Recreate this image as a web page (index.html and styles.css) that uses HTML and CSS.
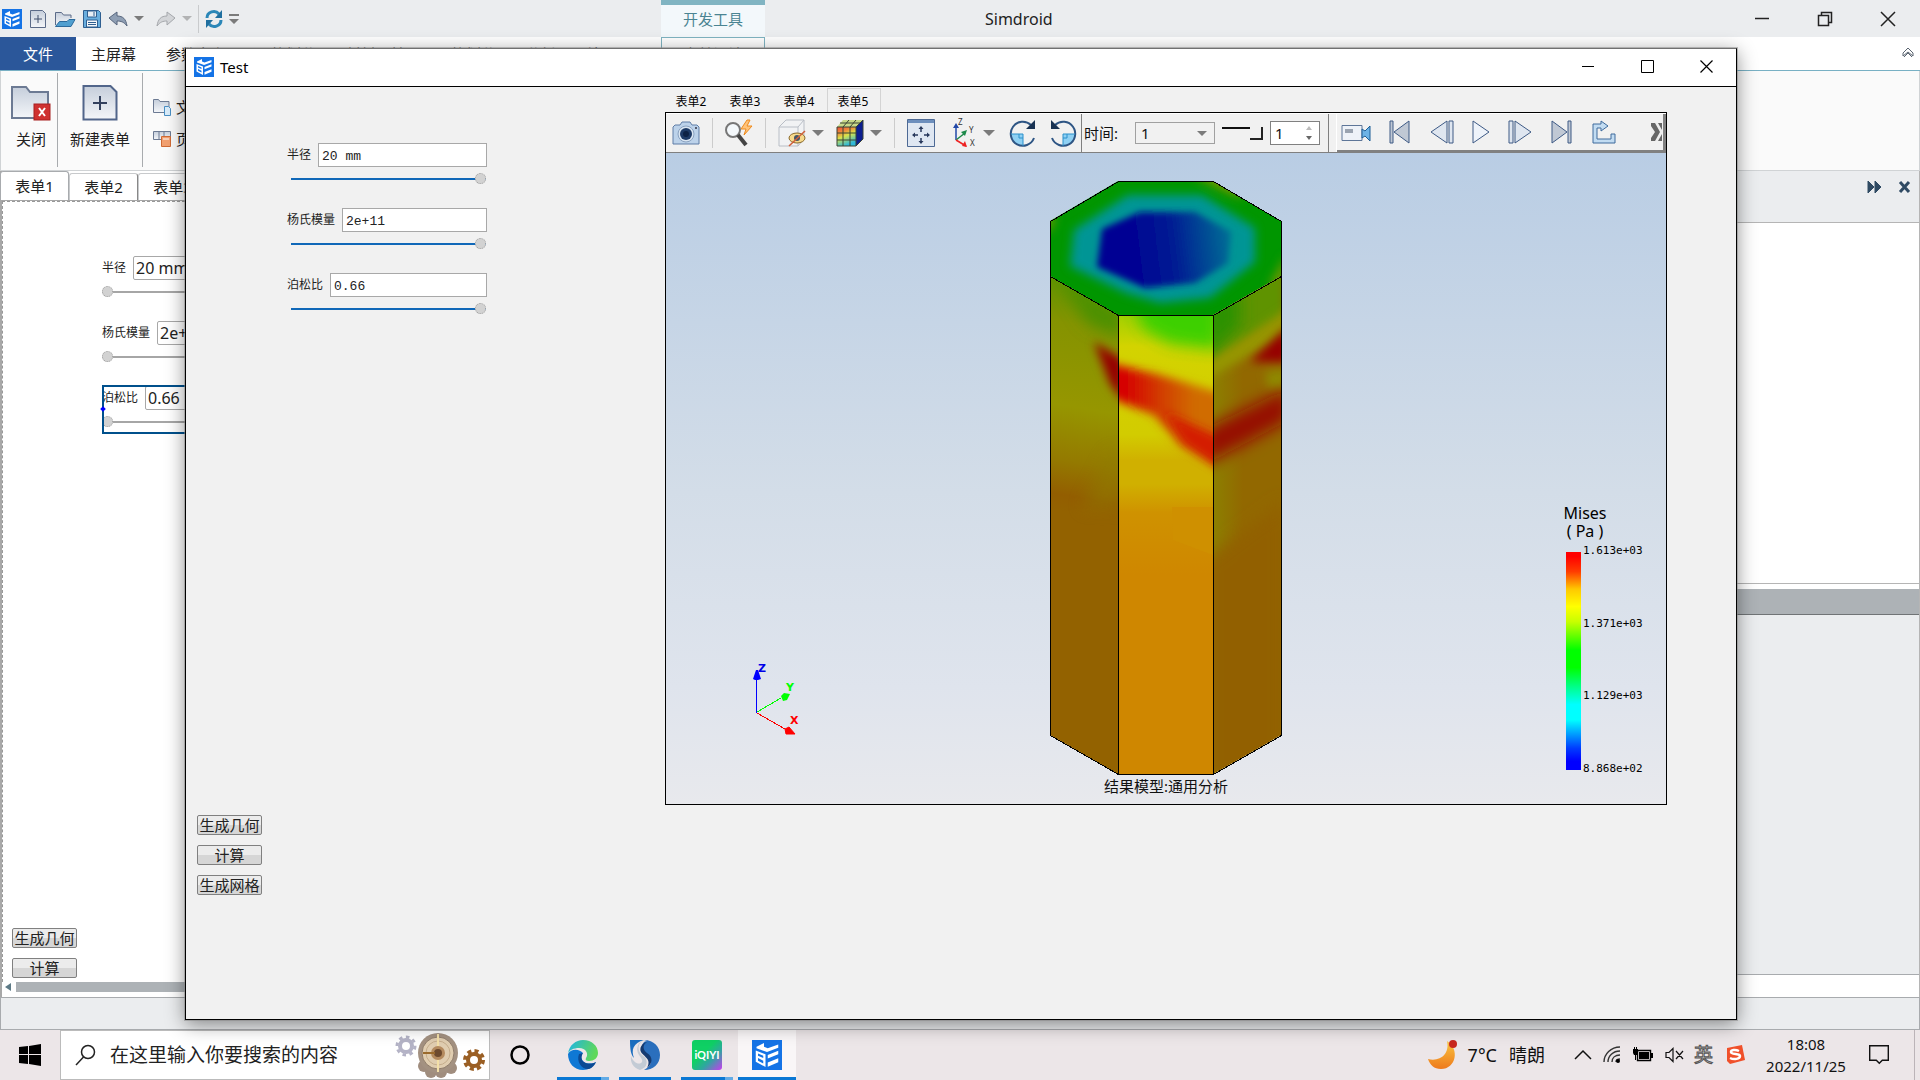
FILE: index.html
```html
<!DOCTYPE html>
<html lang="zh-CN">
<head>
<meta charset="utf-8">
<title>Simdroid</title>
<link rel="stylesheet" href="styles.css">
</head>
<body>
<svg class="defs" aria-hidden="true">
  <symbol id="logo" viewBox="0 0 20 20">
    <rect width="20" height="20" fill="#1473e6"/>
    <path d="M3 4.500L8 2v2.500l2.500 1L17.500 3v2.200L10 8 3 5.500z" fill="#fff"/>
    <path d="M2.500 7l6.500 2.500V18l-6.500-3.500zM4 9v1.500l3.500 1.500v-1.500zM4 12v1.800l3.500 1.800v-1.800z" fill="#fff" fill-rule="evenodd"/>
    <path d="M10.500 10l7-2.800v2.300l-7 2.800zM10.500 15l7-2.800v2.600l-7 3z" fill="#fff"/>
  </symbol>
  <symbol id="caret" viewBox="0 0 12 8"><path d="M0 1h12L6 7z" fill="#7b7b7b"/></symbol>
  <linearGradient id="steel" x1="0" y1="0" x2="0" y2="1"><stop offset="0" stop-color="#c5cedb"/><stop offset="1" stop-color="#f4f6f9"/></linearGradient>
</svg>

<div class="app">
  <header class="titlebar">
    <div class="quick">
      <svg class="i20"><use href="#logo"/></svg>
      <button aria-label="新建"><svg width="20" height="20" viewBox="0 0 20 20"><path d="M2.500 1.500h12l3 3v14h-15z" fill="url(#steel)" stroke="#5b6b88"/><path d="M10 6v8M6 10h8" stroke="#3c4c6b"/></svg></button>
      <button aria-label="打开"><svg width="22" height="20" viewBox="0 0 22 20"><path d="M1.500 16V3.500h6l2 2.500H17v3" fill="url(#steel)" stroke="#5b6b88"/><path d="M1.500 17.500l4-5H13l2-2h6l-4 7z" fill="#4f9fd0" stroke="#2b6a9c"/></svg></button>
      <button aria-label="保存"><svg width="20" height="20" viewBox="0 0 20 20"><path d="M1.500 1.500h15l2 2v15h-17z" fill="#69aede" stroke="#2f5f90"/><path d="M5.500 2h9v6h-9z" fill="#e8eef5" stroke="#2f5f90"/><path d="M4.500 11h11v7h-11z" fill="#f5f7fa" stroke="#2f5f90"/><path d="M6 13.500h8M6 15.500h8M12 3v4" stroke="#2f5f90"/></svg></button>
      <button aria-label="撤销"><svg width="20" height="20" viewBox="0 0 20 20"><path d="M1 9l8-6v4c6 0 9 3 10 10-3-4-6-5-10-5v4z" fill="#8f9fb4" stroke="#56657c"/></svg></button>
      <svg class="c10"><use href="#caret"/></svg>
      <button aria-label="重做" class="redo"><svg width="20" height="20" viewBox="0 0 20 20"><path d="M19 9l-8-6v4C5 7 2 10 1 17c3-4 6-5 10-5v4z" fill="#d3d5d8" stroke="#a4a7ab"/></svg></button>
      <svg class="c10 dim"><use href="#caret"/></svg>
      <i class="bar"></i>
      <button aria-label="刷新"><svg width="18" height="20" viewBox="0 0 18 20"><path d="M2 9C2 3 10 0 14 5" fill="none" stroke="#2b87b8" stroke-width="3"/><path d="M17 1v8H10z" fill="#1f6f9f"/><path d="M16 11c0 6-8 9-12 4" fill="none" stroke="#2b87b8" stroke-width="3"/><path d="M1 19v-8h7z" fill="#1f6f9f"/></svg></button>
      <svg width="10" height="12" viewBox="0 0 10 12"><path d="M0 1h10v2H0zM0 6h10l-5 5z" fill="#7b7b7b"/></svg>
    </div>
    <div class="context">开发工具</div>
    <h1>Simdroid</h1>
    <div class="winctl">
      <button aria-label="最小化"><svg width="16" height="16"><path d="M1 7.500h14" stroke="#222" stroke-width="1.500"/></svg></button>
      <button aria-label="还原"><svg width="16" height="16"><path d="M4.500 4V1.500h10v10H12M1.500 4.500h10v10h-10z" fill="none" stroke="#222" stroke-width="1.500"/></svg></button>
      <button aria-label="关闭"><svg width="16" height="16"><path d="M1 1l14 14M15 1L1 15" stroke="#222" stroke-width="1.500"/></svg></button>
    </div>
  </header>

  <nav class="ribtabs">
    <button class="file">文件</button>
    <button>主屏幕</button>
    <button>参数定义</button>
    <button>网格划分</button>
    <button>材料属性</button>
    <button>网格划分</button>
    <button>分析</button>
    <button>结果显示</button>
    <button class="dev">表单设计</button>
    <svg class="fold" width="12" height="12" viewBox="0 0 12 12"><path d="M1 6l5-5 5 5v3L6 5 1 9zM2 10l4-4 4 4" fill="none" stroke="#5a6470"/></svg>
  </nav>

  <div class="ribbon">
    <button class="big close"><svg width="40" height="36" viewBox="0 0 40 36"><path d="M1 33V2h14l4 5h18v26z" fill="url(#steel)" stroke="#6c7a93" stroke-width="2"/><rect x="23" y="19" width="16" height="16" fill="#cf3130" stroke="#a82020"/><path d="M28 23l6 8M34 23l-6 8" stroke="#fff" stroke-width="2"/></svg>关闭</button>
    <button class="big"><svg width="36" height="36" viewBox="0 0 36 36"><path d="M1.500 1h27l6 6v27.500h-33z" fill="url(#steel)" stroke="#51658a" stroke-width="2"/><path d="M18 11v14M11 18h14" stroke="#33415e" stroke-width="2"/></svg>新建表单</button>
    <div class="small">
      <button><svg width="20" height="20" viewBox="0 0 20 20"><path d="M1.500 15.500V2.500h5l1.500 2h9v11z" fill="url(#steel)" stroke="#6c7a93"/><path d="M12.500 9.500h4l2 2v7h-6z" fill="#d9ecfa" stroke="#4a8fc4"/></svg>文件管理</button>
      <button><svg width="20" height="20" viewBox="0 0 20 20"><path d="M1.500 2.500h17v8h-17zM7 3v7M12 3v7" fill="url(#steel)" stroke="#6c7a93"/><path d="M9.500 7.500h9v10h-9z" fill="#f2a070" stroke="#cf6a35"/><path d="M11 10h6" stroke="#fff"/></svg>页面布局</button>
    </div>
  </div>

  <main class="work">
    <section class="doc">
      <div class="doctabs"><button class="on">表单1</button><button>表单2</button><button>表单3</button></div>
      <div class="canvas">
        <form class="fields">
          <div class="field"><div class="row"><label for="a1">半径</label><input id="a1" value="20 mm"></div><input type="range" aria-label="半径" value="0"></div>
          <div class="field"><div class="row"><label for="a2">杨氏模量</label><input id="a2" value="2e+11"></div><input type="range" aria-label="杨氏模量" value="0"></div>
          <div class="field picked"><div class="row"><label for="a3">泊松比</label><input id="a3" value="0.66"></div><input type="range" aria-label="泊松比" value="0"></div>
        </form>
        <div class="acts"><button>生成几何</button><button>计算</button></div>
      </div>
      <div class="hscroll"><svg width="6" height="10"><path d="M6 1v8L0 5z" fill="#5d7a86"/></svg><i></i></div>
    </section>
    <aside class="dock">
      <div class="dockhead">
        <svg width="15" height="14"><path d="M1 1l6 6-6 6zM8 1l6 6-6 6z" fill="#2f4a63" stroke="#2f4a63"/></svg>
        <svg width="13" height="14"><path d="M2 2l9 10M11 2L2 12" stroke="#2f4a63" stroke-width="3"/></svg>
      </div>
      <div class="pane"></div>
      <div class="panehead"></div>
      <div class="pane2"></div>
    </aside>
  </main>
  <footer class="status"></footer>

  <div class="dialog" role="dialog" aria-label="Test">
    <div class="dtitle">
      <svg class="i20"><use href="#logo"/></svg><h2>Test</h2>
      <div class="dctl">
        <button aria-label="最小化"><svg width="13" height="13"><path d="M0 6.500h12" stroke="#000"/></svg></button>
        <button aria-label="最大化"><svg width="13" height="13"><path d="M.5.500h12v12H.5z" fill="none" stroke="#000"/></svg></button>
        <button aria-label="关闭"><svg width="13" height="13"><path d="M.5.500l12 12M12.500.500l-12 12" stroke="#000" stroke-width="1.200"/></svg></button>
      </div>
    </div>
    <div class="dbody">
      <div class="side">
        <form class="fields mono">
          <div class="field"><div class="row"><label for="b1">半径</label><input id="b1" value="20 mm"></div><input type="range" aria-label="半径" value="100"></div>
          <div class="field"><div class="row"><label for="b2">杨氏模量</label><input id="b2" value="2e+11"></div><input type="range" aria-label="杨氏模量" value="100"></div>
          <div class="field"><div class="row"><label for="b3">泊松比</label><input id="b3" value="0.66"></div><input type="range" aria-label="泊松比" value="100"></div>
        </form>
        <div class="acts"><button>生成几何</button><button>计算</button><button>生成网格</button></div>
      </div>
      <div class="results">
        <div class="vtabs"><button>表单2</button><button>表单3</button><button>表单4</button><button class="on">表单5</button></div>
        <div class="viewer">
          <div class="tools">
            <div class="grp view">
              <button aria-label="截图"><svg width="28" height="28" viewBox="0 0 28 28"><path d="M1 8l2-2h5l2-3h8l2 3h5l2 2v17H1z" fill="#bcd2ea" stroke="#5f7da6"/><circle cx="14" cy="15" r="8" fill="#d9e5f2" stroke="#8aa2c0"/><circle cx="14" cy="15" r="6" fill="#1d3a66"/><circle cx="14" cy="15" r="3" fill="#0d2245"/><circle cx="24" cy="9" r="1" fill="#334"/></svg></button>
              <i></i>
              <button aria-label="查询"><svg width="28" height="28" viewBox="0 0 28 28"><circle cx="8" cy="11" r="7" fill="#f4f8fb" stroke="#777" stroke-width="2"/><path d="M13 16l8 10" stroke="#444" stroke-width="4"/><path d="M22 1l-6 9h5l-2 6 8-9h-5l3-6z" fill="#ffc37a" stroke="#ee8a1d"/></svg></button>
              <i></i>
              <button aria-label="显示"><svg width="28" height="28" viewBox="0 0 28 28"><path d="M1 8l7-7h18v19l-6 7H1zM1 8h19v19M20 8l6-7" fill="#f1f2f4" stroke="#b9bec6"/><ellipse cx="19" cy="19" rx="8" ry="5" fill="#f6d98c" stroke="#8b6a2a"/><circle cx="19" cy="19" r="3" fill="#456"/><path d="M11 27L27 12" stroke="#d2603a" stroke-width="1.500"/></svg></button>
              <svg class="c12"><use href="#caret"/></svg>
              <button aria-label="云图"><svg width="28" height="28" viewBox="0 0 28 28"><defs><linearGradient id="rb" x1="0" y1="0" x2=".4" y2="1"><stop offset="0" stop-color="#e84a3a"/><stop offset=".3" stop-color="#f08a3a"/><stop offset=".55" stop-color="#d9e34a"/><stop offset="1" stop-color="#2fb8d8"/></linearGradient></defs><path d="M1 8h19v19H1z" fill="url(#rb)"/><path d="M1 8l6-7h20l-7 7z" fill="#c9d98a"/><path d="M20 8l7-7v19l-7 7z" fill="#0d1f8f"/><path d="M1 8h19v19H1zM7 8v19M14 8v19M1 14h19M1 21h19M7 8l6-7M14 8l6-7M4 4h20M20 8l7-7v19l-7 7" fill="none" stroke="#3b4434"/></svg></button>
              <svg class="c12"><use href="#caret"/></svg>
              <i></i>
              <button aria-label="适应窗口"><svg width="28" height="28" viewBox="0 0 28 28"><path d="M.5.500h27v27H.5z" fill="#dfe7f2" stroke="#4d6994"/><path d="M1 1h26v3H1z" fill="#6d8fbd"/><path d="M14 8v5M14 19v5M6 16h5M17 16h5" stroke="#28395c" stroke-width="1.500"/><path d="M11.500 10l2.500-3 2.500 3zM11.500 22l2.500 3 2.500-3zM8 13.500L5 16l3 2.500zM20 13.500l3 2.500-3 2.500z" fill="#28395c"/></svg></button>
              <button aria-label="视角" class="ax"><svg width="24" height="28" viewBox="0 0 24 28"><path d="M3 21V7" stroke="#2147a8" stroke-width="1.500"/><path d="M0 9l3-5 3 5z" fill="#2147a8"/><path d="M3 21l9-7" stroke="#1d8a4a" stroke-width="1.500"/><path d="M14 11l-6 2 4 4z" fill="#1d8a4a"/><path d="M3 21l10 6" stroke="#e22" stroke-width="1.500"/><path d="M14 28l-2-6-3 5z" fill="#e22"/><g font-family="Noto Sans" font-size="8" fill="#333"><text x="5" y="6">Z</text><text x="16" y="14">Y</text><text x="17" y="27">X</text></g></svg></button>
              <svg class="c12"><use href="#caret"/></svg>
              <button aria-label="顺时针旋转" class="cw"><svg width="28" height="28" viewBox="0 0 28 28"><path d="M2 15h12v12C7 27 2 22 2 15z" fill="#8ed0f3"/><path d="M22 6a12 12 0 1 0 3 13" fill="none" stroke="#2e5584" stroke-width="2"/><path d="M26 1v9h-9z" fill="#183252"/><path d="M2 15h12v12M10 15v4h4" fill="none" stroke="#2a90cb"/></svg></button>
              <button aria-label="逆时针旋转"><svg width="28" height="28" viewBox="0 0 28 28"><path d="M26 15H14v12c7 0 12-5 12-12z" fill="#8ed0f3"/><path d="M6 6a12 12 0 1 1-3 13" fill="none" stroke="#2e5584" stroke-width="2"/><path d="M2 1v9h9z" fill="#183252"/><path d="M26 15H14v12M18 15v4h-4" fill="none" stroke="#2a90cb"/></svg></button>
            </div>
            <div class="grp time">
              <label for="step">时间:</label>
              <div class="combo"><select id="step"><option>1</option></select><svg class="c10"><use href="#caret"/></svg></div>
              <input type="range" aria-label="时间步" value="100">
              <div class="spin"><input aria-label="帧" value="1"><svg width="8" height="16" viewBox="0 0 8 16"><path d="M1 5h6L4 1z" fill="#bbb"/><path d="M1 11h6l-3 4z" fill="#666"/></svg></div>
            </div>
            <div class="grp play">
              <button aria-label="录像"><svg width="30" height="24" viewBox="0 0 30 24"><path d="M1 5.500h20v15H1z" fill="#eef2f8" stroke="#5e7698"/><path d="M4 9h8v4H4z" fill="#9aa3b0"/><path d="M21 9l3 2 5-5v15l-5-5-3 2z" fill="#6db3e6" stroke="#1f5f96"/></svg></button>
              <button aria-label="首帧"><svg width="22" height="24" viewBox="0 0 22 24"><path d="M1 1h3v22H1zM20 1v22L5 12z" fill="#c0c8d4" stroke="#3e5a85"/></svg></button>
              <button aria-label="上一帧"><svg width="24" height="24" viewBox="0 0 24 24"><path d="M23 1h-4v22h4zM17 1v22L1 12z" fill="#dfe6f0" stroke="#3e5a85"/></svg></button>
              <button aria-label="播放"><svg width="18" height="24" viewBox="0 0 18 24"><path d="M1 1v22l16-11z" fill="#eef3fa" stroke="#3e5a85"/></svg></button>
              <button aria-label="下一帧"><svg width="24" height="24" viewBox="0 0 24 24"><path d="M1 1h4v22H1zM7 1v22l16-11z" fill="#dfe6f0" stroke="#3e5a85"/></svg></button>
              <button aria-label="末帧"><svg width="22" height="24" viewBox="0 0 22 24"><path d="M21 1h-3v22h3zM2 1v22l15-11z" fill="#c0c8d4" stroke="#3e5a85"/></svg></button>
              <button aria-label="导出"><svg width="26" height="24" viewBox="0 0 26 24"><path d="M2 23V4h8V1l7 5-7 5V8H6v11h14v-5h4v9z" fill="#c2dcf2" stroke="#3e6a9c"/></svg></button>
              <button aria-label="更多" class="more"><svg width="11" height="18" viewBox="0 0 11 18"><path d="M0 0h11v18H0z" fill="#666"/><path d="M0 3l4 6-4 6zM4 0l5 9-5 9h3l4-7V7L7 0z" fill="#eee"/></svg></button>
            </div>
          </div>
          <div class="scene">
            <svg class="model" viewBox="666 153 1000 651" role="img" aria-label="Mises 云图">
              <defs>
                <filter id="s2" x="-50%" y="-50%" width="200%" height="200%"><feGaussianBlur stdDeviation="3"/></filter>
                <filter id="s4" x="-50%" y="-50%" width="200%" height="200%"><feGaussianBlur stdDeviation="5"/></filter>
                <filter id="s7" x="-50%" y="-50%" width="200%" height="200%"><feGaussianBlur stdDeviation="8"/></filter>
                <clipPath id="ct"><path d="M1118 181h95l68 40v55l-68 39h-95l-68-39v-55z"/></clipPath>
                <clipPath id="cl"><path d="M1050 276l68 39v459l-68-39z"/></clipPath>
                <clipPath id="cf"><path d="M1118 315h95v459h-95z"/></clipPath>
                <clipPath id="cr"><path d="M1213 315l68-39v459l-68 39z"/></clipPath>
                <linearGradient id="gl" gradientUnits="userSpaceOnUse" x1="1068" y1="276" x2="1030" y2="506"><stop offset="0" stop-color="#5f9300"/><stop offset=".2" stop-color="#859300"/><stop offset=".55" stop-color="#969600"/><stop offset=".78" stop-color="#947a00"/><stop offset=".93" stop-color="#935e00"/><stop offset="1" stop-color="#936200"/></linearGradient>
                <linearGradient id="gf" gradientUnits="userSpaceOnUse" x1="0" y1="315" x2="0" y2="575"><stop offset="0" stop-color="#a0d000"/><stop offset=".12" stop-color="#d3d300"/><stop offset=".46" stop-color="#d2cc00"/><stop offset=".56" stop-color="#d0b000"/><stop offset=".65" stop-color="#d0b000"/><stop offset=".76" stop-color="#cf9200"/><stop offset="1" stop-color="#cf8700"/></linearGradient>
                <linearGradient id="gr" gradientUnits="userSpaceOnUse" x1="1213" y1="0" x2="1243" y2="0"><stop offset="0" stop-color="#8c8000"/><stop offset="1" stop-color="#926800"/></linearGradient>
                <linearGradient id="gb" gradientUnits="userSpaceOnUse" x1="1130" y1="255" x2="1228" y2="243"><stop offset="0" stop-color="#000093"/><stop offset=".45" stop-color="#001c93"/><stop offset="1" stop-color="#006a95"/></linearGradient>
                <linearGradient id="gred" gradientUnits="userSpaceOnUse" x1="1125" y1="0" x2="1195" y2="0"><stop offset="0" stop-color="#d60000"/><stop offset=".5" stop-color="#d23c00"/><stop offset="1" stop-color="#d06c00"/></linearGradient>
              </defs>
              <g clip-path="url(#ct)">
                <path d="M1050 181h231v134h-231z" fill="#009600"/>
                <g filter="url(#s4)"><path d="M1190 174h40l16 24-15-4z" fill="#7c9800"/><path d="M1286 255v30l-18 2z" fill="#6c9600"/><path d="M1042 215l14 2-8 18z" fill="#709700"/>
                <path d="M1128 195h74l53 33v34l-45 36-50 5-34-10-56-27 4-36z" fill="#009595"/></g>
                <path d="M1140 212h55l36 20-3 31-33 20-50 5-48-21 5-38z" fill="url(#gb)" filter="url(#s2)"/>
              </g>
              <g clip-path="url(#cl)">
                <path d="M1050 276h68v498h-68z" fill="url(#gl)"/>
                <path d="M1052 270l70 42v26l-34-14z" fill="#4c9100" filter="url(#s7)"/>
                <path d="M1110 452h12v56h-40z" fill="#907b00" opacity=".5" filter="url(#s7)"/>
                <path d="M1094 342l30 18v42l-14-18z" fill="#950000" filter="url(#s4)"/>
              </g>
              <g clip-path="url(#cf)">
                <path d="M1118 315h95v459h-95z" fill="url(#gf)"/>
                <path d="M1134 300h86v50l-50-6-28-16z" fill="#30d000" opacity=".9" filter="url(#s7)"/>
                <path d="M1105 362l55 13 60 18v74l-40-22-26-30-46-18z" fill="url(#gred)" filter="url(#s4)"/>
                <path d="M1164 412l58 26v32l-38-26z" fill="#d41a00" filter="url(#s4)"/>
                <path d="M1172 507h41v48l-40-15z" fill="#cf9000"/>
              </g>
              <g clip-path="url(#cr)">
                <path d="M1213 276h68v498h-68z" fill="url(#gr)"/>
                <path d="M1205 560l80-60v280h-80z" fill="#926000" filter="url(#s7)"/>
                <path d="M1205 300l80-40v60l-80 50z" fill="#5f9300" filter="url(#s4)"/>
                <path d="M1205 305l35-15v35l-35 35z" fill="#2c9200" filter="url(#s7)"/>
                <path d="M1205 364l84-56v26l-84 46z" fill="#969600" filter="url(#s4)"/>
                <path d="M1250 362l38-36v36z" fill="#960000" filter="url(#s4)"/>
                <path d="M1266 372l22-2v20h-20z" fill="#8f8c00" filter="url(#s4)"/>
                <path d="M1203 430l86-42v32l-86 46z" fill="#961000" filter="url(#s7)"/>
              </g>
              <path d="M1118.500 181.500h95l68 40v514l-68 39h-95l-68-39v-514zM1050.500 276.500l68 39h95l68-39M1118.500 315.500v459M1213.500 315.500v459" fill="none" stroke="#000" shape-rendering="crispEdges"/>
              <g class="axes">
                <path d="M756.500 713v-36" stroke="#00f"/><path d="M753 679l3-9h2l3 9-3 1h-3z" fill="#00f"/>
                <path d="M757 712l24-14" stroke="#0f0" shape-rendering="crispEdges"/><path d="M781 696l3-3 6 1-3 6-4 1z" fill="#0f0"/>
                <path d="M757 713l28 16" stroke="#f00" shape-rendering="crispEdges"/><path d="M785 729l4-2 6 7-9 0z" fill="#f00" stroke="#f00"/>
                <text x="758" y="672" fill="#0000e8">Z</text><text x="786" y="691" fill="#0f0">Y</text><text x="790" y="724" fill="#f00">X</text>
              </g>
            </svg>
            <div class="caption">结果模型:通用分析</div>
            <div class="legend">
              <div class="lt">Mises<br>( Pa )</div>
              <div class="scale"><i></i><ol><li>1.613e+03</li><li>1.371e+03</li><li>1.129e+03</li><li>8.868e+02</li></ol></div>
            </div>
          </div>
        </div>
      </div>
    </div>
  </div>
</div>

<footer class="taskbar">
  <button class="start" aria-label="开始"><svg width="22" height="22" viewBox="0 0 22 22"><path d="M0 3l9-1v8H0zM10 2l12-2v10H10zM0 11h9v9l-9-1zM10 11h12v11l-12-2z"/></svg></button>
  <div class="search">
    <svg width="22" height="22" viewBox="0 0 22 22"><circle cx="13" cy="8" r="6.500" fill="none" stroke="#222" stroke-width="1.500"/><path d="M8.500 13L1 21" stroke="#222" stroke-width="1.500"/></svg>
    <input aria-label="搜索" placeholder="在这里输入你要搜索的内容">
    <svg width="92" height="46" viewBox="0 0 92 46">
      <circle cx="11" cy="14" r="6" fill="none" stroke="#b4b3c6" stroke-width="4"/><circle cx="11" cy="14" r="9" fill="none" stroke="#b4b3c6" stroke-width="3" stroke-dasharray="3.500 3.500"/>
      <g fill="#a08d7e"><circle cx="29" cy="34" r="6"/><circle cx="36" cy="40" r="6"/><circle cx="46" cy="40" r="6"/><circle cx="56" cy="36" r="6"/></g>
      <circle cx="43" cy="21" r="20" fill="#a39181"/><circle cx="43" cy="21" r="16" fill="#e0cdb0" stroke="#8f7c6a"/><circle cx="43" cy="21" r="12" fill="none" stroke="#c5ad8c"/><path d="M43 2v38" stroke="#f3dfa8" stroke-width="2"/><circle cx="43" cy="21" r="7" fill="#b48a5e"/><circle cx="43" cy="21" r="4" fill="#6d4a2e"/><path d="M28 21h12" stroke="#9a6a2c" stroke-width="2"/>
      <circle cx="79" cy="28" r="6" fill="none" stroke="#9a5f24" stroke-width="4"/><circle cx="79" cy="28" r="9" fill="none" stroke="#9a5f24" stroke-width="4" stroke-dasharray="4 3.100"/>
    </svg>
  </div>
  <button class="app-b cortana" aria-label="Cortana"><svg width="20" height="20"><circle cx="10" cy="10" r="8.500" fill="none" stroke="#000" stroke-width="2.500"/></svg></button>
  <button class="app-b run multi" aria-label="Edge"><svg width="30" height="30" viewBox="0 0 30 30"><defs><linearGradient id="e1" x1="0" y1="0" x2="1" y2=".3"><stop offset="0" stop-color="#1fb5e8"/><stop offset="1" stop-color="#5fd85a"/></linearGradient></defs><path d="M0 14c0 9 6 16 15 16 6 0 10-3 13-8-4 2-9 2-12 0-4-3-3-7-1-9C12 9 3 8 0 14z" fill="#0f78d4"/><path d="M0 14C1 5 8 0 15 0c9 0 15 6 15 13 0 5-4 8-9 8-3 0-4-1-3-3 3-4 0-10-7-10C6 8 1 10 0 14z" fill="url(#e1)"/><path d="M11 14c-3 8 3 16 10 15 3-1 6-4 7-7-4 2-9 2-12 0-3-2-3-6-1-9z" fill="#0b4a94"/></svg></button>
  <button class="app-b run" aria-label="浏览器"><svg width="30" height="30" viewBox="0 0 30 30"><path d="M0 0h14C3 3 1 10 4 18 1 15 0 10 0 0z" fill="#1b6ec0"/><path d="M14 0c10 0 16 7 16 15 0 9-7 15-16 15 8-4 9-11 4-15-4-3-6-4-6-8 0-3 2-6 5-6z" fill="#2b6fbd"/><path d="M15 0C7 2 7 11 12 15c5 3 6 8 3 12-1 1-3 2-5 3C3 28 0 22 1 16c2 6 7 9 10 7s0-5-2-8C5 9 8 1 15 0z" fill="#c3cbd5"/><path d="M17 2c-5 3-4 8 0 11 6 4 6 10 0 15 5-9-3-11-6-16-2-4 1-9 6-10z" fill="#153a70"/></svg></button>
  <button class="app-b run multi" aria-label="爱奇艺"><svg width="30" height="30" viewBox="0 0 30 30"><defs><linearGradient id="iq" x1="0" y1="0" x2="1" y2="1"><stop offset=".4" stop-color="#0fd064"/><stop offset=".65" stop-color="#2fa6a0"/><stop offset="1" stop-color="#c93bf0"/></linearGradient></defs><rect width="30" height="30" rx="3" fill="url(#iq)"/><text x="15" y="19" text-anchor="middle" font-family="Lato" font-weight="bold" font-size="11" fill="#fff">iQIYI</text></svg></button>
  <button class="app-b run now" aria-label="Simdroid"><svg width="30" height="30"><use href="#logo"/></svg></button>
  <div class="tray">
    <svg class="moon" width="30" height="30" viewBox="0 0 30 30"><defs><linearGradient id="mo" x1="0" y1="0" x2="0" y2="1"><stop offset="0" stop-color="#f9c440"/><stop offset="1" stop-color="#ee7a1c"/></linearGradient></defs><path d="M19 1c13 8 9 28-6 28C6 29 2 25 0 19c12 3 22-5 19-18z" fill="url(#mo)"/><circle cx="25" cy="4" r="4" fill="#c8271e"/></svg>
    <span class="wx">7°C</span><span class="wx2">晴朗</span>
    <svg width="16" height="16"><path d="M0 12l8-8 8 8" fill="none" stroke="#111" stroke-width="1.500"/></svg>
    <svg width="18" height="18" viewBox="0 0 18 18"><g fill="none" stroke="#333" stroke-width="1.400"><path d="M1 16C1 8 8 1 17 1M5 16C5 10 10 5 17 5M9 16c0-4 3-7 8-7M13 16c0-2 1-3 4-3"/></g><circle cx="15" cy="15" r="2"/></svg>
    <svg width="20" height="16" viewBox="0 0 20 16"><path d="M4.500 3.500h13v10h-13z" fill="none" stroke="#000" stroke-width="1.400"/><path d="M6 5h10v7H6zM18 6h2v5h-2zM0 2h5v4l-1 2H1L0 6zM2 8h1v5H2zM1 0h1v3H1zM3 0h1v3H3z"/></svg>
    <svg width="20" height="16" viewBox="0 0 20 16"><path d="M1 5.500h3l4-4v13l-4-4H1zM11 4l7 8M18 4l-7 8" fill="none" stroke="#111" stroke-width="1.200"/></svg>
    <span class="ime">英</span>
    <svg width="20" height="20" viewBox="0 0 20 20"><path d="M2 3l15-3 3 15-15 4-3-3z" fill="#f0502a"/><path d="M14 6C10 4 6 5 6 7c0 3 9 1 9 4 0 3-6 4-10 2" fill="none" stroke="#fff" stroke-width="2.500"/></svg>
    <div class="clock"><time>18:08</time><span>2022/11/25</span></div>
    <svg class="note" width="20" height="20" viewBox="0 0 20 20"><path d="M.7.700h18.600v14.600h-6l-3 3-3-3H.7z" fill="none" stroke="#111" stroke-width="1.400"/></svg>
  </div>
</footer>
</body>
</html>
```

FILE: styles.css
```css
* { box-sizing: border-box; }
html, body { height: 100%; }
body {
  margin: 0;
  display: flex;
  flex-direction: column;
  overflow: hidden;
  font: 15px/20px "Noto Sans", "Noto Sans CJK SC", sans-serif;
  color: #222;
}
button, input, select { font: inherit; color: inherit; }
button { padding: 0; border: 0; background: none; white-space: nowrap; }
svg { display: block; flex: none; overflow: visible; }
h1, h2 { margin: 0; font-size: 15px; font-weight: normal; }
ol { margin: 0; padding: 0; list-style: none; }
.defs { position: absolute; width: 0; height: 0; }
.i20 { width: 20px; height: 20px; }
.c10 { width: 10px; height: 7px; }
.c12 { width: 12px; height: 8px; }
.dim { opacity: .5; }

.app { position: relative; flex: 1; min-height: 0; display: flex; flex-direction: column; background: #fff; }

/* main title bar */
.titlebar { position: relative; flex: none; height: 37px; display: flex; align-items: center; background: #ebedef; }
.quick { width: 661px; padding-left: 2px; display: flex; align-items: center; gap: 6px; }
.quick .redo { margin-left: 6px; }
.quick .bar { width: 1px; height: 28px; background: #c9cbcd; }
.context { width: 104px; height: 37px; border-top: 5px solid #80b4c2; background: #f3f8fb; color: #4a8492; text-align: center; line-height: 29px; }
.titlebar h1 { flex: 1; padding-left: 220px; font-size: 16px; }
.winctl { display: flex; gap: 47px; padding-right: 24px; }

.ribtabs { flex: none; display: flex; height: 34px; border-bottom: 1px solid #78b0c4; }
.ribtabs button { padding: 0 15px; }
.ribtabs .file { width: 76px; background: #2b579a; color: #fff; }
.ribtabs .dev { width: 104px; border: 1px solid #80b4c2; border-bottom: 0; }
.ribtabs .fold { margin: 10px 6px 0 auto; }

.ribbon { flex: none; display: flex; height: 100px; border: 1px solid #d0d3d5; border-top: 0; background: #fafafa; }
.big { display: flex; flex-direction: column; align-items: center; gap: 8px; width: 85px; margin: 2px 0 3px; padding-top: 12px; border-right: 1px solid #a8abae; }
.big.close { width: 57px; padding-left: 4px; }
.small { display: flex; flex-direction: column; gap: 12px; padding: 26px 9px; }
.small button { display: flex; align-items: center; gap: 4px; }

/* form designer behind the dialog */
.work { flex: 1; min-height: 0; display: flex; }
.doc { flex: 1; min-width: 0; display: flex; flex-direction: column; border-left: 2px solid #a8a8a8; }
.doctabs { flex: none; display: flex; align-items: flex-end; height: 30px; margin-left: -2px; border-bottom: 1px solid #a8a8a8; }
.doctabs button { width: 69px; height: 27px; border: 1px solid #c8cacc; border-right-color: #888; border-bottom: 0; border-radius: 3px 3px 0 0; background: #fff; }
.doctabs .on { height: 29px; border-color: #a8abae; }
.canvas { flex: 1; display: flex; flex-direction: column; justify-content: space-between; border-left: 1px dashed #999; border-top: 1px dashed #999; }
.canvas .fields { padding: 54px 0 0 99px; }
.canvas .acts { padding: 0 0 4px 9px; }
.hscroll { flex: none; display: flex; align-items: center; gap: 5px; height: 15px; padding: 0 0 5px 3px; }
.hscroll i { flex: 1; height: 10px; background: #adb2b6; }
.status { flex: none; height: 33px; border: 1px solid #a8abae; background: #ebedef; }

.dock { width: 400px; display: flex; flex-direction: column; border-right: 1px solid #b5b5b5; background: #fff; }
.dockhead { flex: none; display: flex; justify-content: flex-end; gap: 16px; height: 52px; padding: 9px 8px 0 0; background: #ebedef; border-bottom: 1px solid #b5b5b5; }
.pane { flex: 361 0 0; border-bottom: 1px solid #b5b5b5; }
.panehead { flex: none; height: 26px; margin-top: 5px; background: #adb2b6; border-bottom: 1px solid #707476; }
.pane2 { flex: 360 0 0; margin-bottom: 22px; background: #ebedef; border-bottom: 1px solid #a8abae; }

/* labelled value + slider */
.field { position: relative; width: 200px; height: 65px; }
.row { display: flex; align-items: center; gap: 7px; height: 24px; font-size: 12px; }
.row label { flex: none; }
.row input { flex: 1; min-width: 0; height: 24px; padding: 0 2px; border: 1px solid #a8a8a8; border-radius: 2px; background: #fff; font-size: 16px; }
.field input[type=range] { display: block; width: 200px; height: 12px; margin: 6px 0 0; }
input[type=range] { appearance: none; background: none; }
input[type=range]::-webkit-slider-runnable-track { height: 2px; background: #a6a6a6; }
input[type=range]::-webkit-slider-thumb { appearance: none; width: 11px; height: 11px; margin-top: -5px; border: 1px dotted #a0a0a0; border-radius: 50%; background: #d2d2d2; }
.picked::after { content: ""; position: absolute; inset: -1px 0 17px 0; border: 2px solid #00508c; }
.picked::before { content: ""; position: absolute; left: -1px; top: 21px; width: 4px; height: 4px; background: #00f; transform: rotate(45deg); z-index: 1; }
.mono .row input { border-radius: 0; padding: 2px 3px 0; font: 13px "Liberation Mono", monospace; }
.mono .field input[type=range] { width: 195px; margin-left: 4px; }
.mono .field input[type=range]::-webkit-slider-runnable-track { background: #1068b8; }

.acts { display: flex; flex-direction: column; gap: 10px; }
.acts button { width: 65px; height: 20px; border: 1px solid #808080; border-radius: 2px; background: linear-gradient(#ececec 50%, #d6d6d6 50%); line-height: 16px; }

/* dialog */
.dialog { position: absolute; inset: 48px 183px 10px 185px; display: flex; flex-direction: column; border: 1px solid #000; border-top-color: #707070; outline: 1px solid #8888; background: #f1f1f1; box-shadow: 0 4px 18px rgba(0, 0, 0, .45); }
.dtitle { flex: none; height: 38px; display: flex; align-items: center; padding: 0 0 2px 8px; background: #fff; border-bottom: 1px solid #000; color: #000; }
.dtitle h2 { flex: 1; padding-left: 6px; }
.dctl { display: flex; gap: 46px; padding-right: 23px; }
.dbody { flex: 1; min-height: 0; display: flex; }
.side { width: 479px; display: flex; flex-direction: column; justify-content: space-between; padding: 56px 0 124px 11px; }
.side .fields { padding-left: 90px; }
.results { flex: 1; min-width: 0; display: flex; flex-direction: column; padding: 0 69px 214px 0; }
.vtabs { flex: none; display: flex; height: 25px; align-items: flex-end; font-size: 12px; color: #000; }
.vtabs button { width: 54px; height: 24px; padding: 2px 2px 0 0; border: 1px solid transparent; border-bottom: 0; }
.vtabs .on { border-color: #d4d4d4; }
.viewer { flex: 1; min-height: 0; display: flex; flex-direction: column; border: 1px solid #000; }

.tools { flex: none; display: flex; height: 40px; border-top: 1px solid #fff; border-bottom: 1px solid #808080; color: #111; }
.grp { display: flex; align-items: center; border-right: 1px solid #808080; }
.view { width: 416px; padding-left: 6px; gap: 12px; }
.view i { width: 1px; height: 30px; background: #ccc; }
.view > svg { margin-left: -6px; }
.view .ax { margin-left: 6px; }
.view .cw { margin-left: 2px; }
.time { width: 247px; padding-left: 2px; }
.time label { width: 51px; }
.combo { display: flex; align-items: center; width: 80px; height: 22px; padding-right: 7px; border: 1px solid #a0a0a0; }
.combo select { flex: 1; min-width: 0; appearance: none; padding: 0 5px; border: 0; background: none; }
.time input[type=range] { width: 41px; height: 14px; margin: 0 7px; }
.time input[type=range]::-webkit-slider-runnable-track { height: 2px; background: #111; margin-top: -10px; }
.time input[type=range]::-webkit-slider-thumb { width: 13px; height: 13px; margin-top: 0; border: solid #222; border-width: 0 2px 2px 0; border-radius: 0; background: #f1f1f1; }
.spin { display: flex; align-items: center; width: 50px; height: 24px; padding-right: 6px; border: 1px solid #808080; background: #fff; }
.spin input { flex: 1; min-width: 0; padding: 0 4px; border: 0; background: none; outline: 0; }
.play { flex: 1; margin-left: 8px; padding: 0 1px 0 4px; justify-content: space-between; border: solid #808080; border-width: 0 3px 2px 0; box-shadow: -1px 0 #fff; }
.play .more { margin-left: 16px; }

.scene { position: relative; flex: 1; min-height: 0; background: linear-gradient(#b9cde4, #d3dde8 52%, #dfe4ed 82%, #e8e9ed); }
.model { width: 100%; height: 100%; }
.axes text { font: bold 11px "DejaVu Sans", sans-serif; }
.caption { position: absolute; left: 0; right: 0; bottom: 8px; text-align: center; color: #111; }
.legend { position: absolute; right: 13px; bottom: 34px; width: 90px; color: #000; }
.lt { width: 44px; text-align: center; font-size: 16px; line-height: 18px; white-space: nowrap; }
.scale { display: flex; gap: 2px; padding: 4px 0 0 3px; margin-top: 8px; }
.scale i { width: 15px; height: 218px; background: linear-gradient(#f00 2%, #ff3c00 9%, #ffc800 17%, #ff0 25%, #c8ff00 32%, #0f0 45%, #0f0 53%, #00ff8c 62%, #0ff 70%, #0ff 77%, #0096ff 84%, #003cff 90%, #00f 96%); }
.scale ol { display: flex; flex-direction: column; justify-content: space-between; height: 232px; margin: -8px 0 -6px; font: 11px/14px "DejaVu Sans Mono", monospace; }

/* taskbar */
.taskbar { flex: none; display: flex; height: 50px; background: #ece6e8; color: #111; }
.start { width: 60px; display: flex; align-items: center; justify-content: center; }
.search { display: flex; align-items: center; width: 430px; padding: 0 2px 0 14px; background: #fff; border: 1px solid #bbb; }
.search input { flex: 1; min-width: 0; padding: 0 0 0 13px; border: 0; outline: 0; background: none; font-size: 19px; }
.search input::placeholder { color: #222; opacity: 1; }
.app-b { display: flex; align-items: center; justify-content: center; width: 52px; margin: 0 5px; padding-top: 3px; border-bottom: 3px solid transparent; }
.cortana { width: 58px; margin: 0 3px 0 1px; }
.run { border-color: #0a78d4; }
.multi { border-image: linear-gradient(90deg, #0a78d4 80%, #62abe6 80%) 3; }
.now { width: 58px; margin-left: 0; background: #f9f6f7; }
.tray { flex: 1; display: flex; align-items: center; justify-content: flex-end; gap: 12px; margin-right: 5px; padding-right: 25px; border-right: 1px solid #bbb4b8; }
.wx { margin-left: -2px; font-size: 18px; }
.wx2 { margin-right: 18px; font-size: 18px; }
.ime { margin-left: -3px; font-size: 19px; color: #fff; -webkit-text-stroke: 1px #555; }
.clock { display: flex; flex-direction: column; align-items: center; gap: 2px; width: 94px; margin: 0 4px 0 2px; }
```
